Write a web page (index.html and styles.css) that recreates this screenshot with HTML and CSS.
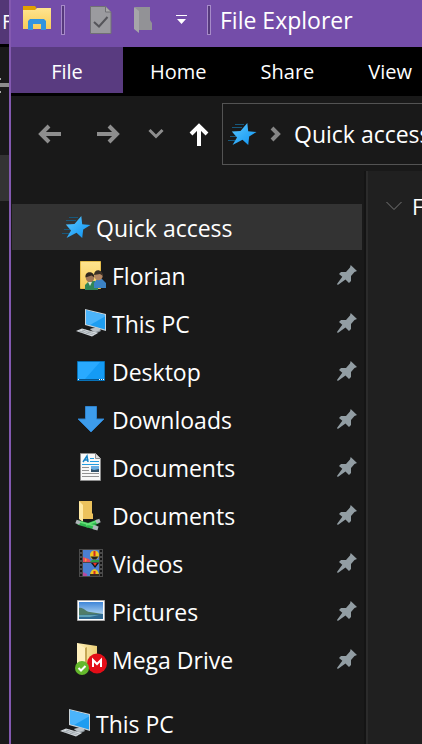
FILE: index.html
```html
<!DOCTYPE html>
<html lang="en">
<head>
<meta charset="utf-8">
<title>File Explorer</title>
<link rel="stylesheet" href="styles.css">
</head>
<body>
<svg class="defs" aria-hidden="true">
  <defs>
    <linearGradient id="blue" x1="0" y1="0" x2="1" y2="1"><stop offset="0" stop-color="#5cc8ff"/><stop offset="1" stop-color="#0c92f2"/></linearGradient>
    <linearGradient id="gold" x1="0" y1="0" x2="0" y2="1"><stop offset="0" stop-color="#ffe48f"/><stop offset="1" stop-color="#f8cd58"/></linearGradient>
    <linearGradient id="cream" x1="0" y1="0" x2="1" y2="0"><stop offset="0" stop-color="#fff0b5"/><stop offset="1" stop-color="#ecd078"/></linearGradient>
    <linearGradient id="sky" x1="0" y1="0" x2="0" y2="1"><stop offset="0" stop-color="#3f86d8"/><stop offset="1" stop-color="#d8f0fa"/></linearGradient>
  </defs>
  <symbol id="star" viewBox="0 0 32 32">
    <path d="M9 6.500h9M6 9.500h10M4 18.500h6M2 22.500h7" stroke="#17587c" stroke-width="1"/>
    <path d="M21.300 5l.9 8.300 8.300 .7-7.300 4.500-1 8.500-5.700-5.300L6.500 27l4.500-7.500L5.800 13.500l8.700-.5z" fill="url(#blue)"/>
  </symbol>
  <symbol id="pc" viewBox="0 0 32 32">
    <path d="M14 22l8-2 3 4-6 3z" fill="#8d969c"/>
    <path d="M9 2l21 5v17L9 18z" fill="#c9d2d8"/>
    <path d="M10 3.300l19 4.600v14.600L10 17z" fill="#1e9df0"/>
    <path d="M10 3.300l19 4.600v1.600L14 18l-4-1z" fill="#4bb4fb"/>
    <path d="M0 24l6-2.500 16 4.500-6 3.500z" fill="#d5dade"/>
    <path d="M3 24l14 4M6 23l13 4M5 25.500l5-3M10 27l5-3" stroke="#969fa5" stroke-width=".7"/>
    <path d="M14 22l7-1.500 4 2.500-6 2z" fill="#bcc3c8"/>
  </symbol>
  <symbol id="pin" viewBox="0 0 20 20">
    <path d="M13.700 0L20 6l-2.500 1-3.500 4v5l-2 2-3.500-3.500L.8 20 0 19l5.300-7.200L2 9l2-2h5l4-4.500z" fill="#929da3"/>
  </symbol>
</svg>

<div class="desktop">
  <div class="behind" aria-hidden="true">
    <div class="behind-title">F</div>
    <div class="behind-ribbon"><svg width="9" height="24" viewBox="0 0 9 24"><path d="M0 10h9v4H0z" fill="#8c8c8c"/><path d="M0 5h1v2H0zM0 18h1v2H0z" fill="#aaa"/></svg></div>
    <div class="behind-row"></div>
  </div>

  <main class="window">
    <header class="titlebar">
      <svg class="app-icon" width="28" height="24" viewBox="0 0 28 24"><path d="M0 0h12l1.500 2L12 5H0z" fill="#e3a000"/><path d="M0 4h12l2-2h14v21H0z" fill="url(#gold)"/><path d="M5 24V15l2-2h14l2 2v9h-5v-6h-8v6z" fill="#3294df"/></svg>
      <span class="separator"></span>
      <button class="tool properties" aria-label="Properties"><svg width="22" height="28" viewBox="0 0 22 28"><path d="M.5 .5h15l5.500 5.500v21.500H.5z" fill="#9b9b9f" stroke="#707074"/><path d="M15.500 .5V6H21" fill="#aaa" stroke="#707074"/><path d="M4 16l5 4.500L17.500 11" fill="none" stroke="#55555a" stroke-width="2"/></svg></button>
      <button class="tool new-folder" aria-label="New folder"><svg width="19" height="28" viewBox="0 0 19 28"><path d="M1 1h15v13l2 3v7H1z" fill="#929296"/><path d="M0 1l5 4v22L0 23z" fill="#a6a6a9"/></svg></button>
      <button class="tool customize" aria-label="Customize Quick Access Toolbar"><svg width="11" height="10" viewBox="0 0 11 10"><path d="M0 0h11v1H0zM1 4h9L5.500 9z" fill="#fff"/></svg></button>
      <span class="separator"></span>
      <h1>File Explorer</h1>
    </header>

    <nav class="tabs" aria-label="Ribbon">
      <button class="file">File</button>
      <button>Home</button>
      <button>Share</button>
      <button>View</button>
    </nav>

    <div class="navigation">
      <button aria-label="Back"><svg width="24" height="20" viewBox="0 0 24 20"><path d="M23 10H3M11 2l-8 8 8 8" fill="none" stroke="#8e8e8e" stroke-width="4"/></svg></button>
      <button aria-label="Forward"><svg width="24" height="20" viewBox="0 0 24 20"><path d="M1 10h20M13 2l8 8-8 8" fill="none" stroke="#8e8e8e" stroke-width="4"/></svg></button>
      <button aria-label="Recent locations"><svg width="16" height="12" viewBox="0 0 16 12"><path d="M1.500 2L8 8.500 14.500 2" fill="none" stroke="#8e8e8e" stroke-width="3"/></svg></button>
      <button aria-label="Up"><svg width="20" height="24" viewBox="0 0 20 24"><path d="M10 24V4M2 12l8-8 8 8" fill="none" stroke="#fff" stroke-width="4"/></svg></button>
      <div class="address">
        <svg width="32" height="32"><use href="#star"/></svg>
        <svg width="12" height="16" viewBox="0 0 12 16"><path d="M2 2l6 6-6 6" fill="none" stroke="#858585" stroke-width="4"/></svg>
        <a href="#quick">Quick access</a>
      </div>
    </div>

    <div class="panes">
      <nav class="tree" aria-label="Folders">
        <ul>
          <li id="quick" class="root selected"><svg class="icon" aria-hidden="true"><use href="#star"/></svg><a href="#quick">Quick access</a></li>
          <li><svg class="icon" viewBox="0 0 32 32"><path d="M4.500 2.500h20v27h-20z" fill="url(#gold)" stroke="#e5bd4c"/><path d="M9 31v-5l4-4h6l3 4v5z" fill="#318657"/><path d="M18 29v-5l3-4h5l4 4v5z" fill="#3b82c4"/><circle cx="14" cy="19" r="4.200" fill="#a07858"/><path d="M9.500 18.500c-1-7 9-7 9 0l-3-2z" fill="#30271f"/><circle cx="22.500" cy="17" r="4.200" fill="#b38662"/><path d="M18 16c0-7 9-6 9 1l-3-2z" fill="#3b3026"/><path d="M12 23l2 4 2-4z" fill="#d7e4d8"/></svg><a href="#florian">Florian</a><svg class="pin"><use href="#pin"/></svg></li>
          <li><svg class="icon"><use href="#pc"/></svg><a href="#pc-pin">This PC</a><svg class="pin"><use href="#pin"/></svg></li>
          <li><svg class="icon" viewBox="0 0 32 32"><path d="M1.500 6.500h27v19h-27z" fill="#149bf5" stroke="#0872b7"/><path d="M2 7h22L9 24H2z" fill="#29aaff"/><path d="M2 24h26v1H2z" fill="#07558d"/><path d="M2 24h1v1H2zM23 24h1v1h-1zM25 24h1v1h-1zM27 24h1v1h-1z" fill="#fff"/></svg><a href="#desktop">Desktop</a><svg class="pin"><use href="#pin"/></svg></li>
          <li><svg class="icon" viewBox="0 0 32 32"><path d="M9.500 3.500h11V16H28L15 29 2 16h7.500z" fill="#3d9cec" stroke="#2e82cd"/></svg><a href="#downloads">Downloads</a><svg class="pin"><use href="#pin"/></svg></li>
          <li><svg class="icon" viewBox="0 0 32 32"><path d="M4.500 2.500h15l5 5v22h-20z" fill="#f8f8f8" stroke="#8f8f8f"/><path d="M19.500 2.500v5h5" fill="#ddd" stroke="#8f8f8f"/><path d="M7 11l4-6 1 6M8.500 9h4" fill="none" stroke="#1683c5" stroke-width="1.500"/><path d="M14 7.500h4M14 10.500h9M6 13.500h17" stroke="#239ce0"/><path d="M6 16.500h7M6 19.500h7M6 22.500h17M6 25.500h17" stroke="#929292"/><path d="M15 15h8v6h-8z" fill="#69aee3"/><path d="M15 18l3 1 5-1v3h-8z" fill="#30516a"/></svg><a href="#documents">Documents</a><svg class="pin"><use href="#pin"/></svg></li>
          <li><svg class="icon" viewBox="0 0 32 32"><path d="M3 2h13v12l1 1v5H6z" fill="#ecc25c"/><path d="M3 2l4 4v17l-4-3z" fill="#ffe9a4"/><path d="M2 23.500l18 5M10 27l12-4.500" stroke="#2eb84e" stroke-width="4.500"/><path d="M4 23l15 4M10 26l11-4" stroke="#65df76" stroke-width="1.500"/><path d="M0 22.500l4 1.500M17 28l5 1.500M20 23l4-1.500" stroke="#aeb5b8" stroke-width="4"/></svg><a href="#network-documents">Documents</a><svg class="pin"><use href="#pin"/></svg></li>
          <li><svg class="icon" viewBox="0 0 32 32"><path d="M3 2h24v28H3z" fill="#4b4b4b"/><path d="M5 3v27M25 3v27" stroke="#151515" stroke-width="2" stroke-dasharray="2 2"/><path d="M7 3h16v12H7zM7 16h16v13H7z" fill="#4b7fd1"/><circle cx="18.500" cy="8" r="4.500" fill="#f0c51f"/><path d="M17.500 4h2v5h-2z" fill="#d12926"/><path d="M14.500 9.500h8l-2.500 3h-3z" fill="#222"/><path d="M7 10l3 1 3 1 2 3H7z" fill="#e64b5e"/><path d="M9 11l2 2-2 2z" fill="#f3a331"/><path d="M16 13h7v2h-9z" fill="#2d9c43"/><path d="M15 16h8l-4 5z" fill="#171717"/><path d="M17 16h4l-2 3z" fill="#ed3124"/><path d="M14 29c0-9 9-9 9 0z" fill="#f0c51f"/><path d="M17.500 24h2v3h-2z" fill="#d12926"/><path d="M14 27h9v2h-9z" fill="#332b22"/><path d="M7 25l4 2v2H7z" fill="#b34ba0"/></svg><a href="#videos">Videos</a><svg class="pin"><use href="#pin"/></svg></li>
          <li><svg class="icon" viewBox="0 0 32 32"><path d="M1.500 5.500h27v20h-27z" fill="#fff" stroke="#aaa"/><path d="M3 7h24v17H3z" fill="url(#sky)"/><path d="M3 13c5-1 6 4 11 4l13 2v2H3z" fill="#507c69"/><path d="M3 20l24-1v5H3z" fill="#2f6992"/><path d="M3 20h20l-9 2H3z" fill="#5da1b6"/></svg><a href="#pictures">Pictures</a><svg class="pin"><use href="#pin"/></svg></li>
          <li><svg class="icon" viewBox="0 0 32 32"><path d="M1 0l20 3v21H5z" fill="url(#cream)"/><path d="M1 0l8 5v20l-8-3z" fill="#fff0bd"/><path d="M9 5l2-1v20l-2 1z" fill="#c6a855"/><circle cx="21" cy="20.500" r="10" fill="#e30d17"/><path d="M17 24v-7l4 4 4-4v7" fill="none" stroke="#fff" stroke-width="2"/><circle cx="6" cy="25" r="7" fill="#64b82c"/><path d="M2.500 25l2.500 2.500L9.500 23" fill="none" stroke="#fff" stroke-width="2"/></svg><a href="#mega">Mega Drive</a><svg class="pin"><use href="#pin"/></svg></li>
          <li class="root separate"><svg class="icon"><use href="#pc"/></svg><a href="#pc">This PC</a></li>
        </ul>
      </nav>
      <section class="content">
        <h2><svg width="16" height="10" viewBox="0 0 16 10"><path d="M.5 1L8 8.500 15.500 1" fill="none" stroke="#777" stroke-width="1"/></svg>Frequent folders</h2>
      </section>
    </div>
  </main>
</div>
</body>
</html>
```
FILE: styles.css
```css
* { box-sizing: border-box; }

body {
  margin: 0;
  background: #191919;
  color: #fff;
  font: 23px/32px "Open Sans", "Noto Sans", sans-serif;
  overflow: hidden;
}

button {
  padding: 0;
  border: 0;
  background: none;
  color: inherit;
  font: inherit;
}

a { color: inherit; text-decoration: none; }
svg { display: block; flex: none; }
.icon { overflow: visible; }
.defs { position: absolute; width: 0; height: 0; }

.desktop { display: flex; height: 100vh; }

.behind { flex: none; width: 9px; overflow: hidden; }
.behind-title {
  height: 47px;
  padding: 6px 0 0 2px;
  border-bottom: 3px solid #000;
  background: #533776;
  font-size: 20px;
}
.behind-ribbon { height: 108px; padding-top: 26px; }
.behind-row { height: 46px; background: #333; }

.window {
  flex: 1;
  min-width: 0;
  display: flex;
  flex-direction: column;
  border-left: 2px solid #8359b0;
  overflow: hidden;
}

.titlebar {
  display: flex;
  align-items: center;
  height: 47px;
  padding: 0 0 7px 12px;
  background: #744da9;
}
.app-icon { margin: 0 10px 4px 0; }
.separator {
  flex: none;
  width: 4px;
  height: 30px;
  border: 1px solid #a78bc9;
  background: #563a7c;
}
.tool { flex: none; }
.properties { margin-left: 25px; }
.new-folder { margin-left: 22px; }
.customize { margin: 0 20px 0 23px; }
h1 {
  margin: 0 0 0 9px;
  font-size: 23px;
  font-weight: 400;
  white-space: nowrap;
}

.tabs {
  display: flex;
  height: 49px;
  padding-bottom: 3px;
  background: #000;
  font-size: 20px;
}
.tabs button { flex: none; padding: 4px 27px 0; }
.tabs .file { width: 112px; background: #593b80; }

.navigation {
  display: grid;
  grid-template-columns: 58px 58px 38px 47px 1fr;
  align-items: center;
  height: 75px;
  padding: 0 0 0 10px;
}
.navigation button { display: grid; place-items: center; height: 40px; }
.address {
  display: flex;
  align-items: center;
  height: 62px;
  min-width: 0;
  padding-left: 3px;
  border: 1px solid #535353;
  border-right: 0;
  white-space: nowrap;
  overflow: hidden;
}
.address a { margin-left: 12px; }
.address svg + svg { margin-left: 12px; }

.panes {
  flex: 1;
  min-height: 0;
  display: grid;
  grid-template-columns: 355px 1fr;
}
.tree {
  padding: 33px 2px 0 1px;
  border-right: 2px solid #141414;
  overflow: hidden;
}
.tree ul { margin: 0; padding: 0; list-style: none; }
.tree li {
  display: flex;
  align-items: center;
  gap: 4px;
  height: 46px;
  margin-bottom: 2px;
  padding: 0 5px 0 64px;
}
.tree a { padding-top: 2px; }
.tree .root { padding-left: 48px; }
.tree .selected { background: #333; }
.tree .separate { margin-top: 18px; }
.icon { width: 32px; height: 32px; }
.pin { width: 20px; height: 20px; margin-left: auto; }

.content {
  min-width: 0;
  padding: 19px 0 0 18px;
  border-left: 2px solid #2b2b2b;
  background: #202020;
  overflow: hidden;
}
h2 {
  display: flex;
  align-items: center;
  gap: 10px;
  margin: 0;
  font-size: 22px;
  font-weight: 400;
  white-space: nowrap;
}
```
